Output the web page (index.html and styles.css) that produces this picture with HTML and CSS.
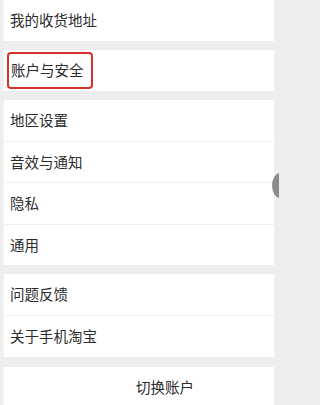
FILE: index.html
```html
<!DOCTYPE html>
<html lang="zh-CN">
<head>
<meta charset="utf-8">
<link rel="stylesheet" href="styles.css">
</head>
<body>
<div class="page">
  <div class="card">
    <div class="row">我的收货地址</div>
  </div>
  <div class="card">
    <div class="row"><span class="hl">账户与安全</span></div>
  </div>
  <div class="card group-main">
    <div class="row">地区设置</div>
    <div class="row">音效与通知</div>
    <div class="row">隐私</div>
    <div class="row">通用</div>
  </div>
  <div class="card group-about">
    <div class="row">问题反馈</div>
    <div class="row">关于手机淘宝</div>
  </div>
  <div class="card card-switch">
    <div class="row switch">切换账户</div>
  </div>
</div>
<div class="handle"></div>
</body>
</html>
```
FILE: styles.css
```css
html, body {
  margin: 0;
  padding: 0;
  background: #eeeeee;
  width: 279px;
  height: 405px;
  overflow: hidden;
}
body {
  font-family: "Noto Sans CJK SC", "Noto Sans", sans-serif;
  color: #2b2b2b;
  position: relative;
}
.page {
  display: flex;
  flex-direction: column;
  gap: 9px;
  padding: 0 4px 0 3px;
}
.card {
  background: #ffffff;
  display: flex;
  flex-direction: column;
  border-left: 1px solid #f3f3f3;
  border-right: 1px solid #f3f3f3;
}
.card-switch {
  margin-top: 1px;
}
.row {
  height: 41px;
  display: flex;
  align-items: center;
  padding-left: 6px;
  font-size: 14.5px;
  line-height: 1;
  box-sizing: border-box;
  flex-shrink: 0;
}
.row + .row {
  border-top: 1px solid #efefef;
}
.group-main .row + .row {
  height: 41.33px;
}
.group-about .row + .row {
  height: 42px;
}
.hl {
  margin-left: -3px;
  padding: 9px 7px 9px 2px;
  border: 2px solid #d8312b;
  border-radius: 4px;
}
.switch {
  padding-left: 132px;
  height: 40px;
}
.handle {
  position: absolute;
  left: 272px;
  top: 173px;
  width: 16px;
  height: 25px;
  border-radius: 50%;
  background: #8c8c8c;
}
```
